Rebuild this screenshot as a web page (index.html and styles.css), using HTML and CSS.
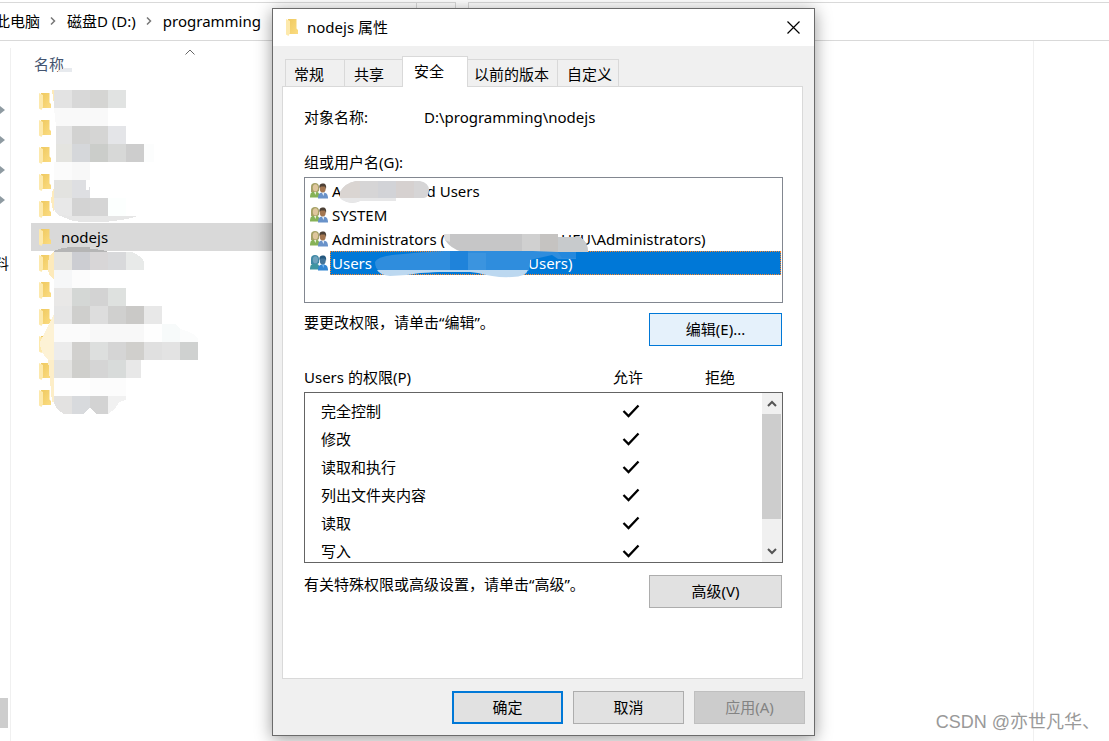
FILE: index.html
```html
<!DOCTYPE html>
<html lang="zh-CN">
<head>
  <meta charset="utf-8">
  <meta name="viewport" content="width=device-width, initial-scale=1">
  <title>nodejs 属性</title>
  <link rel="stylesheet" href="styles.css">
</head>
<body>
<svg class="defs" width="0" height="0" aria-hidden="true">
  <defs>
    <linearGradient id="gold" x1="0" y1="0" x2="1" y2="1">
      <stop offset="0" stop-color="#efc95f"/>
      <stop offset="1" stop-color="#fbdc82"/>
    </linearGradient>
    <symbol id="folder" viewBox="0 0 12 17">
      <path d="M2 0H10.500V9.500L12 11V15H3Z" fill="url(#gold)"/>
      <path d="M0 0L4 2V14L2.500 17L0 15.500Z" fill="#fde9ac"/>
    </symbol>
    <symbol id="users" viewBox="0 0 18 16">
      <path d="M0 14.500C0 10 1.500 8.500 5 8.500S9.500 10.500 9.500 14.500Z" fill="#86b257"/>
      <path d="M3.500 8H6.500L5.500 12Z" fill="#eef0dc"/>
      <path d="M1 9V4C1 1 2.500 0 5 0S9 1.500 9 4V8L7.500 9H2.500Z" fill="#a5a165"/>
      <ellipse cx="5.400" cy="4.800" rx="2.600" ry="3.600" fill="#dfc69d"/>
      <path d="M8 15.500C8 11 9.500 9.500 13 9.500S18 11.500 18 15.500Z" fill="#6992c9"/>
      <path d="M11.500 9H14.500L13.500 13Z" fill="#e4eefa"/>
      <ellipse cx="12.700" cy="5.600" rx="3" ry="4" fill="#a37650"/>
      <path d="M9.500 5C9 1.500 10.500 .500 13 .500S16.700 2.500 16 6L14.800 3.500H11Z" fill="#4d4035"/>
    </symbol>
    <symbol id="users-active" viewBox="0 0 18 16">
      <path d="M0 14.500C0 10 1.500 8.500 5 8.500S9.500 10.500 9.500 14.500Z" fill="#3f95a0"/>
      <path d="M1 9V4C1 1 2.500 0 5 0S9 1.500 9 4V8L7.500 9H2.500Z" fill="#3f88a5"/>
      <ellipse cx="5.400" cy="4.800" rx="2.600" ry="3.600" fill="#70a3bd"/>
      <path d="M8 15.500C8 11 9.500 9.500 13 9.500S18 11.500 18 15.500Z" fill="#3185d2"/>
      <path d="M11.500 9H14.500L13.500 13Z" fill="#72b4ee"/>
      <ellipse cx="12.700" cy="5.600" rx="3" ry="4" fill="#427499"/>
      <path d="M9.500 5C9 1.500 10.500 .500 13 .500S16.700 2.500 16 6L14.800 3.500H11Z" fill="#24587f"/>
    </symbol>
    <symbol id="check" viewBox="0 0 18 14">
      <path d="M1.500 7L6.500 12L16.500 1.500" fill="none" stroke="#000" stroke-width="2.300"/>
    </symbol>
    <symbol id="chevron" viewBox="0 0 6 8">
      <path d="M1 .500L4.500 4L1 7.500" fill="none" stroke="#777" stroke-width="1.500"/>
    </symbol>
    <symbol id="pin" viewBox="0 0 5 8">
      <path d="M0 0L5 4L0 8Z" fill="#8f9ba2"/>
    </symbol>
  </defs>
</svg>

<div class="explorer">
  <header class="address">
    <nav class="crumbs">
      <a href="#">此电脑</a>
      <svg class="sep" width="6" height="8"><use href="#chevron"/></svg>
      <a href="#">磁盘D (D:)</a>
      <svg class="sep" width="6" height="8"><use href="#chevron"/></svg>
      <a href="#">programming</a>
    </nav>
    <div class="address-tail"></div>
    <div class="search"></div>
  </header>
  <div class="main">
    <aside class="tree">
      <div class="pins">
        <svg width="5" height="8"><use href="#pin"/></svg>
        <svg width="5" height="8"><use href="#pin"/></svg>
        <svg width="5" height="8"><use href="#pin"/></svg>
        <svg width="5" height="8"><use href="#pin"/></svg>
      </div>
      <span class="tree-label">料</span>
      <div class="tree-thumb"></div>
    </aside>
    <section class="files">
      <div class="column-head">
        <span>名称</span>
        <svg class="sort" width="10" height="6" viewBox="0 0 10 6"><path d="M.500 5.500L5 1L9.500 5.500" fill="none" stroke="#666"/></svg>
      </div>
      <ul class="folders">
        <li><svg width="12" height="17"><use href="#folder"/></svg></li>
        <li><svg width="12" height="17"><use href="#folder"/></svg></li>
        <li><svg width="12" height="17"><use href="#folder"/></svg></li>
        <li><svg width="12" height="17"><use href="#folder"/></svg></li>
        <li><svg width="12" height="17"><use href="#folder"/></svg></li>
        <li class="selected"><svg width="12" height="17"><use href="#folder"/></svg><span>nodejs</span></li>
        <li><svg width="12" height="17"><use href="#folder"/></svg></li>
        <li><svg width="12" height="17"><use href="#folder"/></svg></li>
        <li><svg width="12" height="17"><use href="#folder"/></svg></li>
        <li><svg width="12" height="17"><use href="#folder"/></svg></li>
        <li><svg width="12" height="17"><use href="#folder"/></svg></li>
        <li><svg width="12" height="17"><use href="#folder"/></svg></li>
      </ul>
      <!-- hidden folder names -->
      <svg class="mosaic" width="180" height="360" viewBox="30 60 180 360" shape-rendering="crispEdges" aria-hidden="true">
        <path d="M58 72Q60 68 66 68H72V72Z" fill="#e7eaee"/>
        <path d="M52 90H54V104Z" fill="#fdeab8"/>
        <path d="M54 90h18v18h-18z" fill="#e3e3e3"/><path d="M72 90h18v18h-18z" fill="#d8d8d8"/><path d="M90 90h18v18h-18z" fill="#d5d5d3"/><path d="M108 90h18v18h-18z" fill="#e1e3e2"/>
        <path d="M54 108H108V126H56Z" fill="#f9f9f9"/>
        <path d="M56 126h16v18h-16z" fill="#e4e4e4"/><path d="M72 126h18v18h-18z" fill="#d2d2d1"/><path d="M90 126h18v18h-18z" fill="#d5d5d4"/><path d="M108 126h18v18h-18z" fill="#e4e5e8"/>
        <path d="M56 144h16v18h-16z" fill="#e4e4e0"/><path d="M72 144h18v18h-18z" fill="#d5d7da"/><path d="M90 144h18v18h-18z" fill="#cbcdca"/><path d="M108 144h18v18h-18z" fill="#d7d8d7"/><path d="M126 144h18v18h-18z" fill="#cdcdcd"/><path d="M144 144h10v18h-10z" fill="#fcfdfd"/>
        <path d="M54 162h18v18h-18z" fill="#fbfbfb"/><path d="M72 162h18v18h-18z" fill="#f8f8f8"/>
        <path d="M54 180h18v18h-18z" fill="#e3e3e0"/><path d="M72 180H86V190H89V187H90V198H72Z" fill="#dedfe2"/>
        <path d="M54 188V212Q50 204 52 192Z" fill="#fdebbd"/>
        <path d="M54 198H72V216H60Q54 212 54 208Z" fill="#e8e8e8"/><path d="M72 198h18v18h-18z" fill="#d3d3d3"/><path d="M90 198h18v18h-18z" fill="#d5d5d5"/><path d="M108 198h18v18h-18z" fill="#fcfffe"/>
        <path d="M59 215L72 216H137Q130 219 120 220Q90 225 70 220Z" fill="#e6e6e6"/>
        <path d="M54 251Q62 247 76 247H90V249Q102 249 108 252H54Z" fill="#b5b5b5"/>
        <path d="M54 252V279Q46 274 48 264Q48 255 54 252Z" fill="#fdeabb"/>
        <path d="M54 252h18v18h-18z" fill="#e5e4e0"/><path d="M72 252h18v18h-18z" fill="#cccdd2"/><path d="M90 252h18v18h-18z" fill="#d8d6d7"/><path d="M108 252h18v18h-18z" fill="#d8d9db"/><path d="M126 252H132Q144 257 144 264V270H126Z" fill="#e8eae9"/>
        <path d="M54 270h18v18h-18z" fill="#f6f7f8"/><path d="M72 270h18v18h-18z" fill="#fcfcfc"/>
        <path d="M54 288h18v18h-18z" fill="#e9e8e7"/><path d="M72 288h18v18h-18z" fill="#d4d7d5"/><path d="M90 288h18v18h-18z" fill="#d3d3d3"/><path d="M108 288h18v18h-18z" fill="#dee1df"/>
        <path d="M54 306h18v18h-18z" fill="#e6e6e6"/><path d="M72 306h18v18h-18z" fill="#cfcfcd"/><path d="M90 306h18v18h-18z" fill="#dddddd"/><path d="M108 306h18v18h-18z" fill="#d0d0cf"/><path d="M126 306h18v18h-18z" fill="#cac9c7"/><path d="M144 306h18v18h-18z" fill="#e8e8e8"/>
        <path d="M54 314V360H49Q40 354 40 342Q46 331 54 314Z" fill="#fdf2d5"/>
        <path d="M54 324h36v18h-36z" fill="#fbfbfb"/><path d="M90 324h54v18h-54z" fill="#f8f8f8"/><path d="M144 324h18v18h-18z" fill="#fefefe"/><path d="M162 324H176L180 329V342H162Z" fill="#f7fafa"/><path d="M180 329Q198 334 198 340V342H180Z" fill="#fbfcfc"/>
        <path d="M54 342h18v18h-18z" fill="#ececec"/><path d="M72 342h18v18h-18z" fill="#d1d0ce"/><path d="M90 342h18v18h-18z" fill="#dddfde"/><path d="M108 342h18v18h-18z" fill="#d5d5d5"/><path d="M126 342h18v18h-18z" fill="#d0cfcc"/><path d="M144 342h18v18h-18z" fill="#e0e0e0"/><path d="M162 342h18v18h-18z" fill="#e3e3e3"/><path d="M180 342h18v18h-18z" fill="#cfd1d0"/>
        <path d="M48 360H54V402H52Z" fill="#fdeec8"/>
        <path d="M54 360h18v18h-18z" fill="#e3e3e1"/><path d="M72 360h18v18h-18z" fill="#cfcfcc"/><path d="M90 360h18v18h-18z" fill="#d5d5d5"/><path d="M108 360h18v18h-18z" fill="#d8dbda"/><path d="M126 360h15v18h-15z" fill="#e8e8e8"/>
        <path d="M54 378h36v18h-36z" fill="#fefefe"/><path d="M90 378h36v18h-36z" fill="#fcfcfc"/>
        <path d="M54 396H72V414H64Q56 410 54 403Z" fill="#e3e2e1"/><path d="M72 396H90V408L83 414H72Z" fill="#d8dadd"/><path d="M90 396H108V414H97L90 408Z" fill="#d3d3d3"/><path d="M108 396H126V400L119 402L115 409L108 414Z" fill="#f1f1f1"/>
      </svg>
    </section>
    <aside class="preview"></aside>
  </div>
</div>

<div class="dialog" role="dialog" aria-labelledby="dialog-title">
  <div class="titlebar">
    <svg width="12" height="17"><use href="#folder"/></svg>
    <h1 id="dialog-title">nodejs 属性</h1>
    <button class="close" aria-label="关闭">
      <svg width="13" height="13" viewBox="0 0 13 13"><path d="M.500 .500L12.500 12.500M12.500 .500L.500 12.500" stroke="#000" stroke-width="1.200"/></svg>
    </button>
  </div>

  <div class="tabs" role="tablist">
    <button class="tab" role="tab">常规</button>
    <button class="tab" role="tab">共享</button>
    <button class="tab active" role="tab" aria-selected="true">安全</button>
    <button class="tab" role="tab">以前的版本</button>
    <button class="tab" role="tab">自定义</button>
  </div>

  <div class="panel" role="tabpanel">
    <div class="object">
      <span class="object-label">对象名称:</span>
      <span>D:\programming\nodejs</span>
    </div>

    <div class="group-label" id="group-label">组或用户名(G):</div>
    <ul class="groups" role="listbox" aria-labelledby="group-label">
      <li role="option"><svg width="18" height="16"><use href="#users"/></svg><span class="name">A<i class="gap-short"></i>d Users</span></li>
      <li role="option"><svg width="18" height="16"><use href="#users"/></svg><span class="name">SYSTEM</span></li>
      <li role="option"><svg width="18" height="16"><use href="#users"/></svg><span class="name">Administrators (<i class="gap-long"></i>HFU\Administrators)</span></li>
      <li role="option" class="current" aria-selected="true"><svg width="18" height="16"><use href="#users-active"/></svg><span class="name">Users<i class="gap-mid"></i>Users)</span></li>
      <!-- hidden account names -->
      <svg class="smudge" width="300" height="124" viewBox="305 178 300 124" aria-hidden="true">
        <path d="M340 192Q345 183 356 181H420Q429 183 429 190Q429 197 424 198H396V201H360Q354 204 347 202Q339 199 340 192Z" fill="#d6d5d6"/>
        <path d="M340 192Q345 183 356 181H360V198H340Z" fill="#dad5d2"/>
        <path d="M340 198H396V201H360Q354 204 347 202Q341 200 340 198Z" fill="#e7e7e8"/>
        <path d="M378 181h18v17h-18z" fill="#d2d3d7"/><path d="M396 181h18v17h-18z" fill="#d6d1d0"/>
        <path d="M444 234H558V237H580Q588 242 588 252H462Q450 248 445 240Z" fill="#c6c6c7"/>
        <path d="M444 234H450V242L445 240Z" fill="#dedede"/>
        <path d="M522 234h18v18h-18z" fill="#d0d0d0"/><path d="M540 234h18v18h-18z" fill="#c5c3c1"/><path d="M558 237H580Q588 242 588 252H558Z" fill="#c7cacc"/>
        <path d="M375 262Q377 257 392 255Q420 252 445 251H533L558 252L576 258V259H558L552 255L530 260V262L529 271H380Q375 269 375 262Z" fill="#2f8ddd"/>
        <path d="M450 251h18v19h-18z" fill="#1f83da"/><path d="M468 253h18v18h-18z" fill="#3b94df"/><path d="M558 252H576V258H562Z" fill="#2488dd"/>
        <path d="M377 270H528Q526 277 512 277Q495 278 478 273L470 272H443L420 273Q405 276 390 276Q380 275 377 270Z" fill="#bcd8f0"/>
        <path d="M418 274L440 272H468L476 274Z" fill="#0078d7"/>
      </svg>
    </ul>

    <div class="action">
      <span>要更改权限，请单击“编辑”。</span>
      <button class="btn wide hover">编辑(E)...</button>
    </div>

    <div class="perm-head">
      <span id="perm-label">Users 的权限(P)</span>
      <span class="center">允许</span>
      <span class="center">拒绝</span>
    </div>
    <div class="perm-box">
      <table class="perms" aria-labelledby="perm-label">
        <tr><td>完全控制</td><td class="allow"><svg width="18" height="14"><use href="#check"/></svg></td><td class="deny"></td></tr>
        <tr><td>修改</td><td class="allow"><svg width="18" height="14"><use href="#check"/></svg></td><td class="deny"></td></tr>
        <tr><td>读取和执行</td><td class="allow"><svg width="18" height="14"><use href="#check"/></svg></td><td class="deny"></td></tr>
        <tr><td>列出文件夹内容</td><td class="allow"><svg width="18" height="14"><use href="#check"/></svg></td><td class="deny"></td></tr>
        <tr><td>读取</td><td class="allow"><svg width="18" height="14"><use href="#check"/></svg></td><td class="deny"></td></tr>
        <tr><td>写入</td><td class="allow"><svg width="18" height="14"><use href="#check"/></svg></td><td class="deny"></td></tr>
      </table>
      <div class="scrollbar">
        <button class="arrow" aria-label="向上"><svg width="10" height="7" viewBox="0 0 10 7"><path d="M1 6L5 2L9 6" fill="none" stroke="#555" stroke-width="2"/></svg></button>
        <div class="thumb"></div>
        <button class="arrow" aria-label="向下"><svg width="10" height="7" viewBox="0 0 10 7"><path d="M1 1L5 5L9 1" fill="none" stroke="#555" stroke-width="2"/></svg></button>
      </div>
    </div>

    <div class="action">
      <span>有关特殊权限或高级设置，请单击“高级”。</span>
      <button class="btn wide">高级(V)</button>
    </div>
  </div>

  <div class="footer">
    <button class="btn default">确定</button>
    <button class="btn">取消</button>
    <button class="btn" disabled>应用(A)</button>
  </div>
</div>

<div class="watermark">CSDN @亦世凡华、</div>
</body>
</html>
```
FILE: styles.css
```css
* {
  box-sizing: border-box;
}
body {
  margin: 0;
  font-family: "Noto Sans", "Noto Sans CJK SC", sans-serif;
  font-size: 15px;
  line-height: 20px;
  color: #000;
  background: #fff;
  overflow: hidden;
}
button {
  font: inherit;
  color: inherit;
  margin: 0;
  padding: 0;
}
ul {
  list-style: none;
  margin: 0;
  padding: 0;
}
svg {
  display: block;
  flex: none;
}
.defs {
  position: absolute;
}

/* explorer window */
.explorer {
  display: flex;
  flex-direction: column;
  height: 100vh;
}
.address {
  display: flex;
  flex: none;
  height: 41px;
  padding-top: 2px;
  border-bottom: 1px solid #d9d9d9;
}
.crumbs {
  display: flex;
  align-items: center;
  width: 421px;
  padding-bottom: 1px;
  margin-left: -5px;
  border-top: 1px solid #d9d9d9;
  border-right: 1px solid #d9d9d9;
  flex: none;
  box-sizing: content-box;
}
.crumbs a {
  color: #000;
  text-decoration: none;
  white-space: nowrap;
}
.sep {
  margin: 0 11px 0 10px;
}
.address-tail {
  width: 39px;
  border: solid #d9d9d9;
  border-width: 1px 1px 0 0;
}
.search {
  flex: 1;
  margin-left: 12px;
  border: solid #d9d9d9;
  border-width: 1px 0 0 1px;
}
.main {
  display: flex;
  flex: 1;
  min-height: 0;
}
.tree {
  display: flex;
  flex-direction: column;
  width: 11px;
  margin-top: 7px;
  padding: 58px 0 13px;
  border-right: 1px solid #f0f0f0;
  overflow: hidden;
}
.pins {
  display: flex;
  flex-direction: column;
  gap: 22px;
}
.tree-label {
  align-self: flex-end;
  margin-top: 49px;
  padding-right: 1px;
}
.tree-thumb {
  width: 8px;
  height: 30px;
  margin-top: auto;
  background: #cdcdcd;
}
.files {
  position: relative;
  flex: 1;
  padding-left: 20px;
}
.column-head {
  display: flex;
  height: 47px;
  padding: 13px 0 0 3px;
  color: #44546f;
}
.sort {
  margin: -5px 0 0 121px;
}
.folders {
  max-width: 600px;
}
.folders li {
  display: flex;
  align-items: center;
  gap: 10px;
  height: 27px;
  padding-left: 8px;
}
.folders .selected {
  height: 28px;
  margin-bottom: -1px;
  background: #d9d9d9;
}
.mosaic {
  position: absolute;
  left: 19px;
  top: 19px;
}
.preview {
  width: 76px;
  border-left: 1px solid #f0f0f0;
}

/* properties dialog */
.dialog {
  position: absolute;
  left: 272px;
  top: 8px;
  width: 543px;
  background: #f0f0f0;
  border: 1px solid #6b6b6b;
  box-shadow: 0 3px 16px rgba(0, 0, 0, 0.4);
}
.titlebar {
  display: flex;
  align-items: center;
  height: 37px;
  padding: 0 14px 1px 13px;
  background: #fff;
}
.titlebar h1 {
  flex: 1;
  margin: 0 0 0 9px;
  font-size: 15px;
  font-weight: normal;
}
.close {
  display: flex;
  background: none;
  border: none;
}
.tabs {
  display: flex;
  align-items: flex-end;
  height: 40px;
  padding-left: 12px;
}
.tab {
  height: 27px;
  padding: 1px 8px 0 6px;
  background: #f0f0f0;
  border: solid #d9d9d9;
  border-width: 1px 1px 0 0;
}
.tab:first-child {
  padding: 1px 20px 0 8px;
  border-left-width: 1px;
}
.tab:nth-child(2) {
  padding: 1px 18px 0 9px;
}
.tab:last-child {
  padding: 1px 6px 0 9px;
}
.tab.active {
  position: relative;
  height: 31px;
  margin: 0 0 -1px -1px;
  padding: 0 23px 2px 11px;
  background: #fff;
  border-left-width: 1px;
}
.panel {
  margin: 0 11px 0 9px;
  height: 593px;
  padding: 20px 19px 0 21px;
  background: #fff;
  border: 1px solid #d9d9d9;
}
.object {
  display: flex;
}
.object-label {
  width: 120px;
}
.group-label {
  margin: 25px 0 5px;
}
.groups {
  position: relative;
  height: 126px;
  padding: 1px;
  border: 1px solid #828790;
}
.groups li {
  display: flex;
  align-items: center;
  height: 24px;
  padding-left: 4px;
  gap: 2px;
}
.groups .name {
  display: flex;
  flex: 1;
  padding: 1px;
  white-space: pre;
  border: 1px solid transparent;
}
.groups .current .name {
  color: #fff;
  background: #0078d7;
  border: 1px dotted #ff8728;
}
.gap-short {
  width: 85px;
}
.gap-mid {
  width: 156px;
}
.gap-long {
  width: 116px;
}
.smudge {
  position: absolute;
  left: 0;
  top: 0;
}
.action {
  display: flex;
  justify-content: space-between;
  align-items: flex-start;
  padding: 10px 1px 0 0;
}
.action span {
  margin-top: -1px;
}
.btn {
  width: 111px;
  height: 33px;
  padding-bottom: 2px;
  background: #e1e1e1;
  border: 1px solid #adadad;
}
.btn.wide {
  width: 133px;
}
.btn.hover {
  background: #e5f1fb;
  border-color: #0078d7;
}
.btn.default {
  border: 2px solid #0078d7;
}
.btn:disabled {
  color: #838383;
  background: #ccc;
  border-color: #bfbfbf;
}
.perm-head {
  display: grid;
  grid-template-columns: 1fr 92px 92px;
  height: 25px;
  margin-top: 21px;
  padding-right: 17px;
}
.center {
  text-align: center;
}
.perm-box {
  display: flex;
  height: 171px;
  border: 1px solid #646464;
  overflow: hidden;
}
.perms {
  flex: 1;
  height: 168px;
  margin-top: 4px;
  table-layout: fixed;
  border-collapse: collapse;
}
.perms td {
  height: 28px;
  padding: 0 0 0 16px;
}
.perms .allow {
  width: 70px;
  padding: 0;
}
.perms .deny {
  width: 70px;
  padding: 0;
}
.scrollbar {
  display: flex;
  flex-direction: column;
  width: 20px;
  padding-right: 1px;
  background: #f0f0f0;
}
.arrow {
  display: flex;
  align-items: center;
  justify-content: center;
  height: 21px;
  border: none;
  background: none;
}
.thumb {
  height: 105px;
  margin-bottom: auto;
  background: #cdcdcd;
}
.perm-box + .action {
  padding-top: 12px;
}
.footer {
  display: flex;
  justify-content: flex-end;
  gap: 10px;
  padding: 12px 9px 11px;
}

.watermark {
  position: absolute;
  right: 9px;
  bottom: 6px;
  font-family: "Liberation Sans", "Noto Sans CJK SC", sans-serif;
  font-size: 18px;
  line-height: 26px;
  color: #999;
}
```
